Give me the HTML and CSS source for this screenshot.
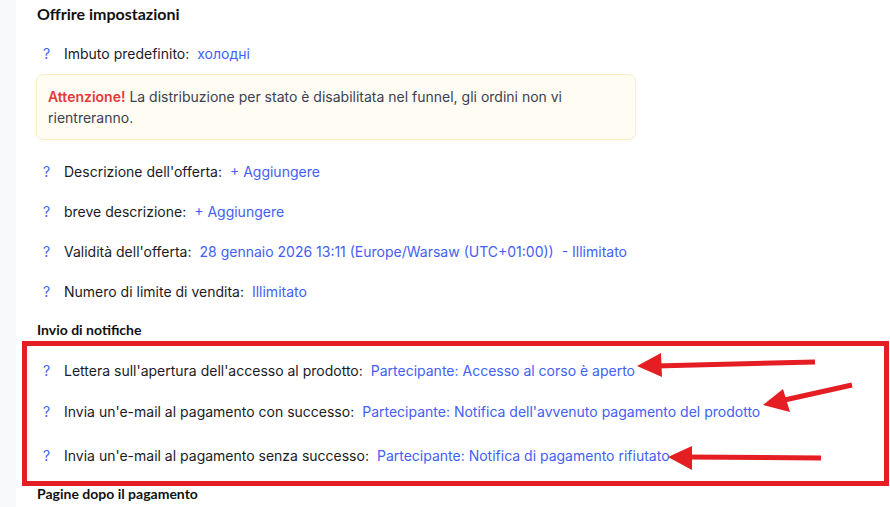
FILE: index.html
```html
<!DOCTYPE html>
<html>
  <head>
    <meta charset="utf-8" />
    <meta name="viewport" content="width=device-width, initial-scale=1" />
    <link rel="stylesheet" href="styles.css">
  </head>

  <body>
    <div class="layout">
      <div class="rail"></div>
      <div class="panel">
        <h2 class="section-title">Offrire impostazioni</h2>
        <div class="row">
          <span class="hint">?</span>
          <span class="label">Imbuto predefinito:</span>
          <a class="value">холодні</a>
        </div>
        <div class="alert">
          <b>Attenzione!</b> La distribuzione per stato è disabilitata nel funnel, gli ordini non vi rientreranno.
        </div>
        <div class="row row-first">
          <span class="hint">?</span>
          <span class="label">Descrizione dell'offerta:</span>
          <a class="value">+ Aggiungere</a>
        </div>
        <div class="row">
          <span class="hint">?</span>
          <span class="label">breve descrizione:</span>
          <a class="value">+ Aggiungere</a>
        </div>
        <div class="row">
          <span class="hint">?</span>
          <span class="label">Validità dell'offerta:</span>
          <a class="value">28 gennaio 2026 13:11 (Europe/Warsaw (UTC+01:00))</a>
          <a class="value extra">- Illimitato</a>
        </div>
        <div class="row">
          <span class="hint">?</span>
          <span class="label">Numero di limite di vendita:</span>
          <a class="value">Illimitato</a>
        </div>

        <h3 class="group-title">Invio di notifiche</h3>
        <div class="marked">
          <div class="row">
            <span class="hint">?</span>
            <span class="label">Lettera sull'apertura dell'accesso al prodotto:</span>
            <a class="value">Partecipante: Accesso al corso è aperto</a>
          </div>
          <div class="row">
            <span class="hint">?</span>
            <span class="label">Invia un'e-mail al pagamento con successo:</span>
            <a class="value">Partecipante: Notifica dell'avvenuto pagamento del prodotto</a>
          </div>
          <div class="row row-last">
            <span class="hint">?</span>
            <span class="label">Invia un'e-mail al pagamento senza successo:</span>
            <a class="value">Partecipante: Notifica di pagamento rifiutato</a>
          </div>
        </div>
        <h3 class="group-title after-mark">Pagine dopo il pagamento</h3>
      </div>
    </div>

    <!-- annotation arrows drawn over the screenshot -->
    <svg class="arrows" width="890" height="507" viewBox="0 0 890 507">
      <g fill="#e41e22" stroke="#e41e22" stroke-width="5">
        <line x1="815" y1="362" x2="655" y2="366" />
        <polygon stroke-width="0" points="637,366 661,353 662,377" />
        <line x1="852" y1="385" x2="780" y2="401" />
        <polygon stroke-width="0" points="763,405 783,389 790,412" />
        <line x1="821" y1="458" x2="685" y2="457" />
        <polygon stroke-width="0" points="668,457 692,446 692,470" />
      </g>
    </svg>
  </body>
</html>
```

FILE: styles.css
```css
body {
  margin: 0;
  background: #fff;
  font-family: Inter, "Noto Sans", sans-serif;
  font-size: 14px;
  color: #1b1b1f;
}
.layout {
  display: flex;
  min-height: 507px;
}
.rail {
  width: 16px;
  flex-shrink: 0;
  background: #f8f9fb;
}
.panel {
  flex: 1;
  padding-top: 4px;
}
.section-title {
  margin: 0 0 9px 21px;
  font-family: Lato, sans-serif;
  font-size: 16px;
  line-height: 20px;
  font-weight: 700;
  color: #111;
}
.group-title {
  margin: 9px 0 0 21px;
  font-family: Lato, sans-serif;
  font-size: 14px;
  line-height: 20px;
  font-weight: 700;
  color: #111;
}
.row {
  display: flex;
  align-items: center;
  height: 40px;
  padding-left: 27px;
  white-space: nowrap;
}
.hint {
  width: 21px;
  color: #4360f5;
}
.label {
  margin-right: 8px;
}
.value {
  color: #4360f5;
  cursor: pointer;
}
.extra {
  margin-left: 8px;
}
.alert {
  margin: 1px 254px 0 20px;
  padding: 11px 11px;
  line-height: 21px;
  color: #3b4150;
  background: #fffcf3;
  border: 1px solid #fbeec6;
  border-radius: 7px;
}
.alert b {
  font-weight: 600;
  color: #e5383b;
}
.row-first {
  margin-top: 11px;
}
.marked {
  margin: 1px 1px 0 6px;
  padding: 4px 0 5px;
  border: 5px solid #e41e22;
}
.marked .row {
  padding-left: 16px;
  height: 41px;
}
.marked .row-last {
  margin-top: 3px;
}
.after-mark {
  margin-top: -1px;
  line-height: 18px;
}
.arrows {
  position: absolute;
  top: 0;
  left: 0;
  pointer-events: none;
}
```
